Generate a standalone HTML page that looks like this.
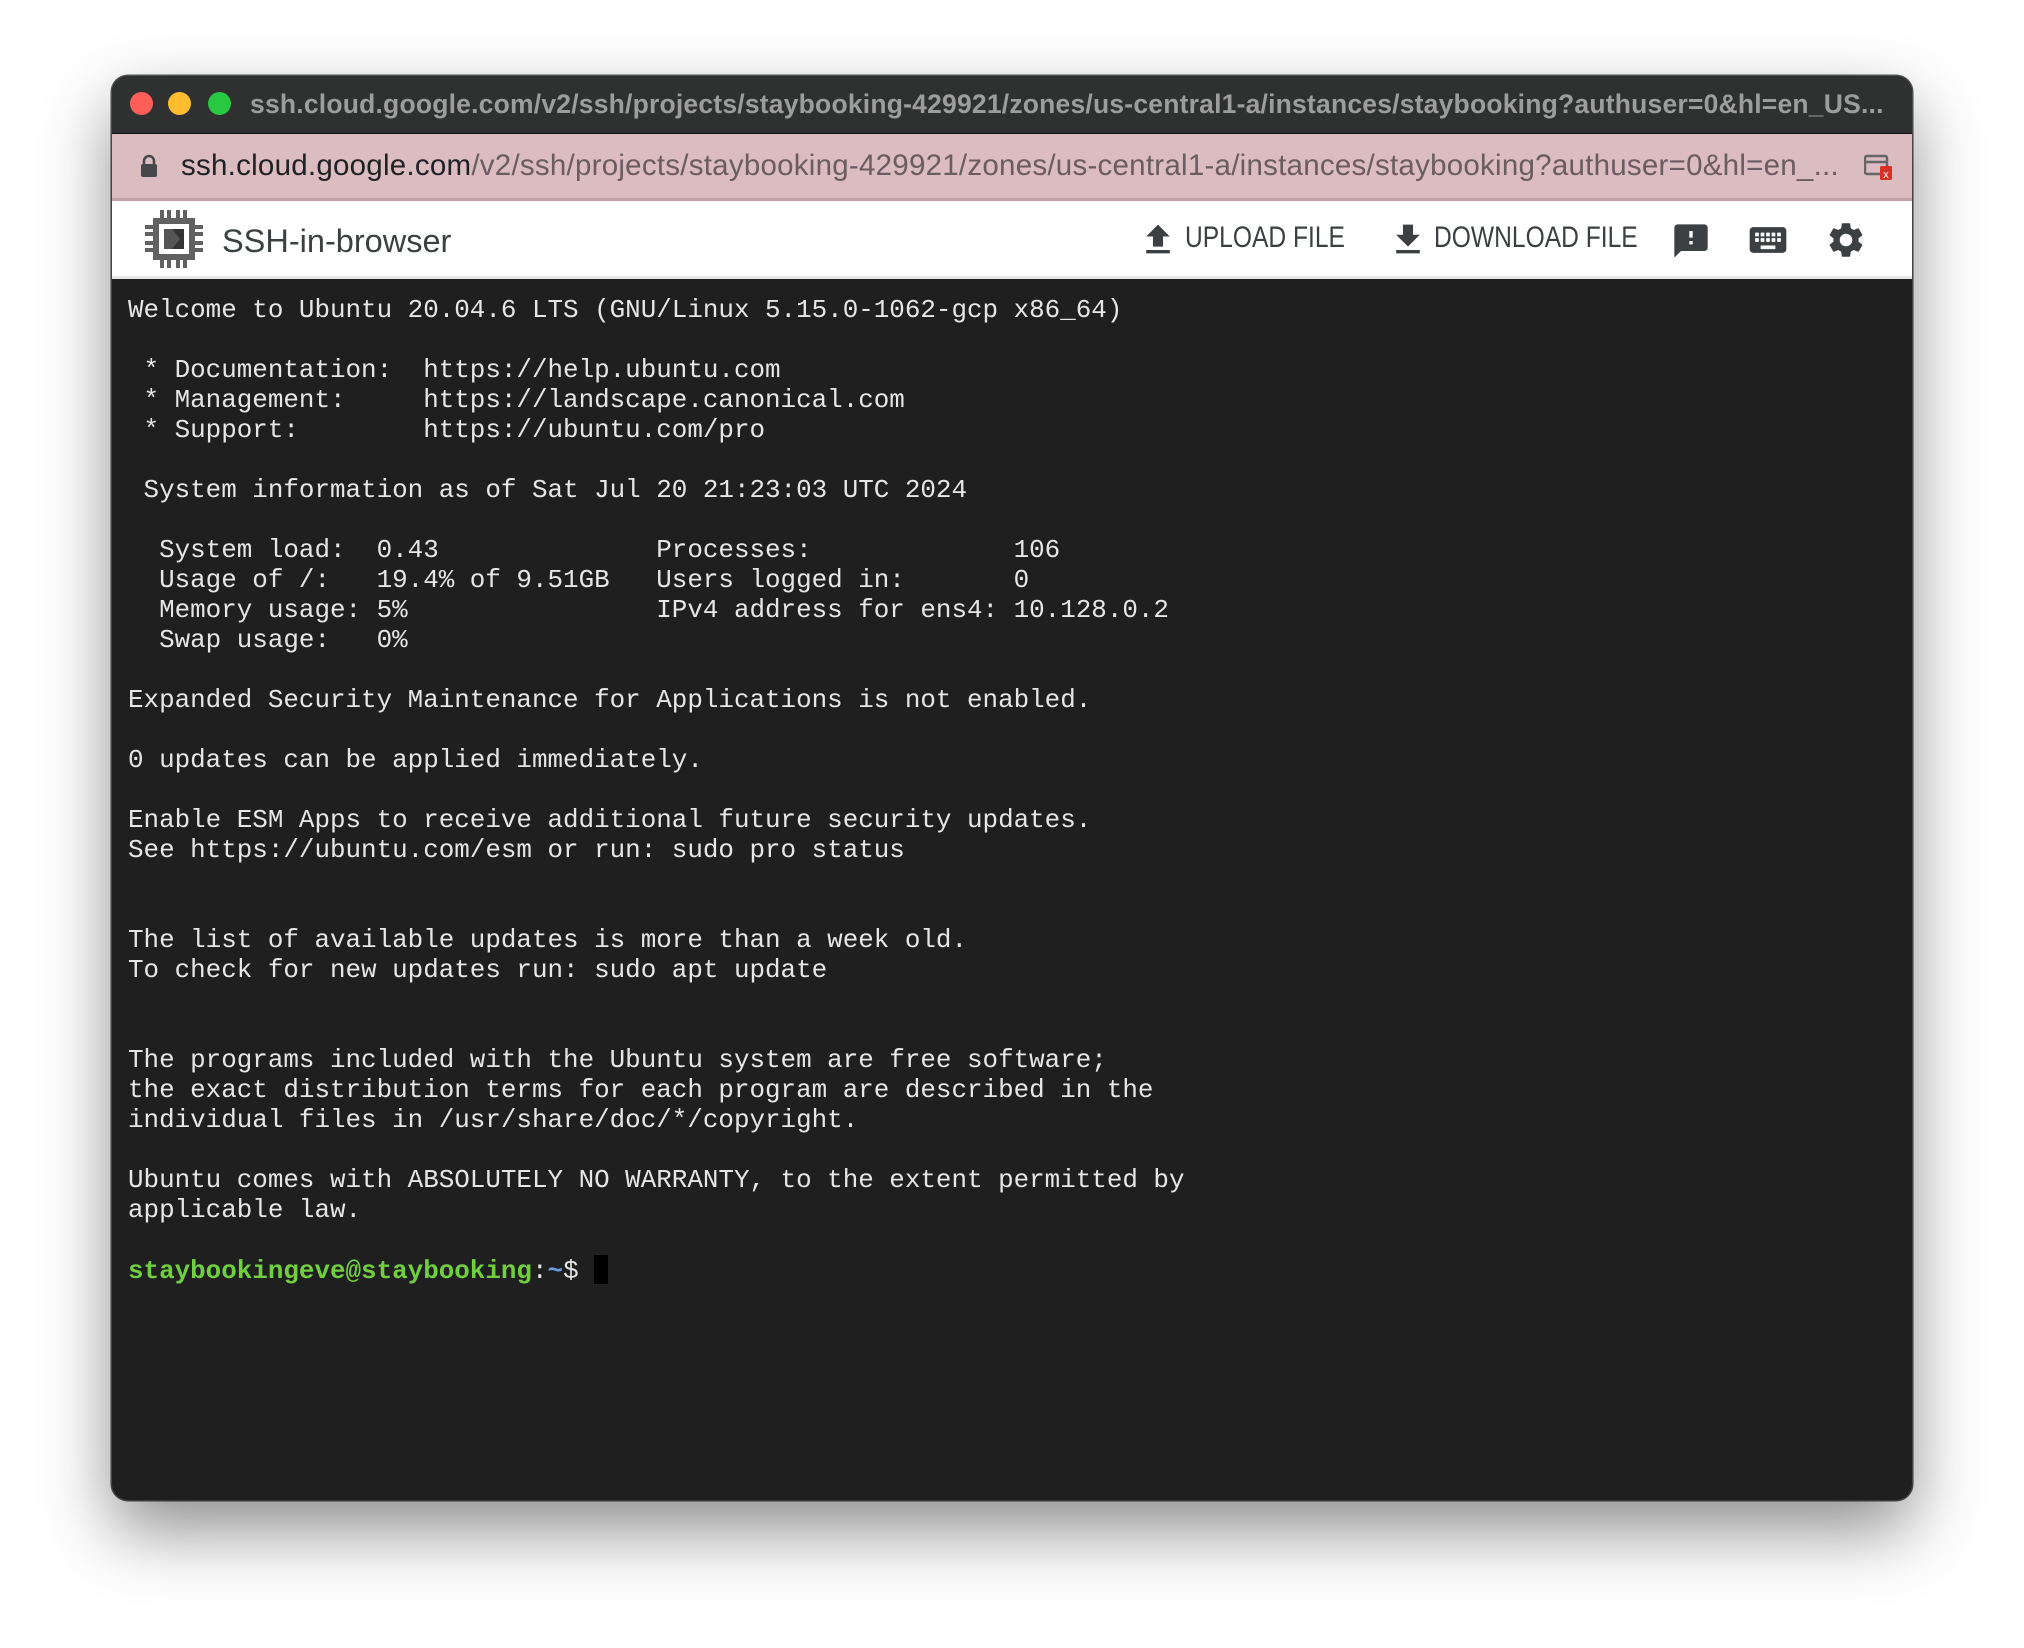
<!DOCTYPE html>
<html><head><meta charset="utf-8">
<style>
html,body{margin:0;padding:0;}
body{width:2024px;height:1648px;background:#fff;position:relative;overflow:hidden;font-family:"Liberation Sans",sans-serif;}
#win{position:absolute;left:112px;top:76px;width:1800px;height:1424px;border-radius:16px;overflow:hidden;background:#1f1f1f;
 box-shadow:0 30px 70px rgba(0,0,0,0.45),0 0 0 1.5px #555;}
#title{position:absolute;left:0;top:0;width:100%;height:57px;background:#2f3030;border-bottom:1px solid #111;}
.dot{position:absolute;top:16px;width:23px;height:23px;border-radius:50%;}
#ttext{position:absolute;left:138px;top:13px;font-weight:bold;font-size:26.5px;color:#9d9d9d;white-space:nowrap;letter-spacing:0.2px;}
#url{position:absolute;left:0;top:58px;width:100%;height:64px;background:#dbbcc1;border-bottom:3px solid #c3a2a8;}
#utext{position:absolute;left:69px;top:15px;font-size:29.5px;color:#6a5c60;white-space:nowrap;letter-spacing:0.25px;}
#utext b{font-weight:normal;color:#202124;}
#tool{position:absolute;left:0;top:125px;width:100%;height:75px;background:#fff;border-bottom:3px solid #e6e8ea;}
#brand{position:absolute;left:110px;top:22px;font-size:32.5px;color:#3c4043;}
.tb{position:absolute;top:20px;font-size:30px;color:#3c4043;white-space:nowrap;transform:scaleX(0.82);transform-origin:0 0;}
svg.ic{position:absolute;}
#term{position:absolute;left:16px;top:219px;margin:0;font-family:"Liberation Mono",monospace;font-size:25.9px;line-height:30px;color:#e6e6e6;white-space:pre;}
.g{color:#6fcf3f;font-weight:bold;}
.bl{color:#6a9de0;font-weight:bold;}
.cur{display:inline-block;width:14px;height:29px;background:#000;vertical-align:-6px;}
</style></head><body>
<div id="win">
 <div id="title">
  <div class="dot" style="left:18px;background:#fe5f57"></div>
  <div class="dot" style="left:56px;background:#febc2e"></div>
  <div class="dot" style="left:96px;background:#28c840"></div>
  <div id="ttext">ssh.cloud.google.com/v2/ssh/projects/staybooking-429921/zones/us-central1-a/instances/staybooking?authuser=0&amp;hl=en_US...</div>
 </div>
 <div id="url">
  <svg class="ic" style="left:28px;top:20px" width="18" height="24" viewBox="0 0 18 24"><path d="M4 10V7a5 5 0 0 1 10 0v3" fill="none" stroke="#45474b" stroke-width="2.5"/><rect x="1" y="10" width="16" height="13" rx="2" fill="#45474b"/></svg>
  <div id="utext"><b>ssh.cloud.google.com</b>/v2/ssh/projects/staybooking-429921/zones/us-central1-a/instances/staybooking?authuser=0&amp;hl=en_...</div>
  <svg class="ic" style="left:1752px;top:20px" width="32" height="28" viewBox="0 0 32 28"><rect x="1" y="2" width="22" height="18" rx="2" fill="none" stroke="#666" stroke-width="2.5"/><line x1="1" y1="8" x2="23" y2="8" stroke="#666" stroke-width="2.5"/><rect x="16" y="12" width="12" height="14" rx="1.5" fill="#d93025"/><text x="22" y="24" font-size="11" fill="#fff" text-anchor="middle" font-family="Liberation Sans">x</text></svg>
 </div>
 <div id="tool">
  <svg class="ic" style="left:33px;top:9px" width="58" height="58" viewBox="0 0 58 58">
   <g fill="#616161"><rect x="15" y="0" width="4" height="9"/><rect x="22" y="0" width="4" height="9"/><rect x="31" y="0" width="4" height="9"/><rect x="38" y="0" width="4" height="9"/>
   <rect x="15" y="49" width="4" height="9"/><rect x="22" y="49" width="4" height="9"/><rect x="31" y="49" width="4" height="9"/><rect x="38" y="49" width="4" height="9"/>
   <rect x="0" y="15" width="9" height="4"/><rect x="0" y="22" width="9" height="4"/><rect x="0" y="31" width="9" height="4"/><rect x="0" y="38" width="9" height="4"/>
   <rect x="49" y="15" width="9" height="4"/><rect x="49" y="22" width="9" height="4"/><rect x="49" y="31" width="9" height="4"/><rect x="49" y="38" width="9" height="4"/>
   <rect x="8" y="8" width="42" height="42"/></g>
   <rect x="14" y="14" width="30" height="30" fill="#fff"/>
   <rect x="19" y="19" width="20" height="20" fill="#555"/>
   <path d="M27 19h12v20h-12l8-10z" fill="#333"/>
  </svg>
  <div id="brand">SSH-in-browser</div>
  <svg class="ic" style="left:1030px;top:22px" width="32" height="32" viewBox="3 2 18 19"><path d="M9 16h6v-6h4l-7-7-7 7h4zm-4 2h14v2H5z" fill="#3c4043"/></svg>
  <div class="tb" style="left:1073px">UPLOAD FILE</div>
  <svg class="ic" style="left:1280px;top:22px" width="32" height="32" viewBox="3 2 18 19"><path d="M19 9h-4V3H9v6H5l7 7 7-7zM5 18v2h14v-2H5z" fill="#3c4043"/></svg>
  <div class="tb" style="left:1322px">DOWNLOAD FILE</div>
  <svg class="ic" style="left:1559px;top:20px" width="40" height="40" viewBox="0 0 24 24"><path d="M20 2H4c-1.1 0-1.99.9-1.99 2L2 22l4-4h14c1.1 0 2-.9 2-2V4c0-1.1-.9-2-2-2zm-7 12h-2v-2h2v2zm0-4h-2V6h2v4z" fill="#3c4043"/></svg>
  <svg class="ic" style="left:1634px;top:17px" width="44" height="44" viewBox="0 0 24 24"><path d="M20 5H4c-1.1 0-1.99.9-1.990 2L2 17c0 1.1.9 2 2 2h16c1.1 0 2-.9 2-2V7c0-1.1-.9-2-2-2zm-9 3h2v2h-2V8zm0 3h2v2h-2v-2zM8 8h2v2H8V8zm0 3h2v2H8v-2zm-1 2H5v-2h2v2zm0-3H5V8h2v2zm9 7H8v-2h8v2zm0-4h-2v-2h2v2zm0-3h-2V8h2v2zm3 3h-2v-2h2v2zm0-3h-2V8h2v2z" fill="#3c4043"/></svg>
  <svg class="ic" style="left:1713px;top:18px" width="42" height="42" viewBox="0 0 24 24"><path d="M19.14 12.94c.04-.3.06-.61.06-.94 0-.32-.02-.64-.07-.94l2.03-1.58c.18-.14.23-.41.12-.61l-1.92-3.32c-.12-.22-.37-.29-.59-.22l-2.39.96c-.5-.38-1.03-.7-1.62-.94l-.36-2.54c-.04-.24-.24-.41-.48-.41h-3.84c-.24 0-.43.17-.47.41l-.36 2.54c-.59.24-1.13.57-1.62.94l-2.39-.96c-.22-.08-.47 0-.59.22L2.74 8.87c-.12.21-.08.47.12.61l2.03 1.58c-.05.3-.09.63-.09.94s.02.64.07.94l-2.03 1.58c-.18.14-.23.41-.12.61l1.92 3.32c.12.22.37.29.59.22l2.39-.96c.5.38 1.03.7 1.62.94l.36 2.54c.05.24.24.41.48.41h3.84c.24 0 .44-.17.47-.41l.36-2.54c.59-.24 1.13-.56 1.62-.94l2.39.96c.22.08.47 0 .59-.22l1.92-3.32c.12-.22.07-.47-.12-.61l-2.01-1.58zM12 15.6c-1.98 0-3.6-1.62-3.6-3.6s1.62-3.6 3.6-3.6 3.6 1.62 3.6 3.6-1.62 3.6-3.6 3.6z" fill="#3c4043"/></svg>
 </div>
<pre id="term">Welcome to Ubuntu 20.04.6 LTS (GNU/Linux 5.15.0-1062-gcp x86_64)

 * Documentation:  https://help.ubuntu.com
 * Management:     https://landscape.canonical.com
 * Support:        https://ubuntu.com/pro

 System information as of Sat Jul 20 21:23:03 UTC 2024

  System load:  0.43              Processes:             106
  Usage of /:   19.4% of 9.51GB   Users logged in:       0
  Memory usage: 5%                IPv4 address for ens4: 10.128.0.2
  Swap usage:   0%

Expanded Security Maintenance for Applications is not enabled.

0 updates can be applied immediately.

Enable ESM Apps to receive additional future security updates.
See https://ubuntu.com/esm or run: sudo pro status


The list of available updates is more than a week old.
To check for new updates run: sudo apt update


The programs included with the Ubuntu system are free software;
the exact distribution terms for each program are described in the
individual files in /usr/share/doc/*/copyright.

Ubuntu comes with ABSOLUTELY NO WARRANTY, to the extent permitted by
applicable law.

<span class="g">staybookingeve@staybooking</span>:<span class="bl">~</span>$ <span class="cur"></span></pre>
</div>
</body></html>
